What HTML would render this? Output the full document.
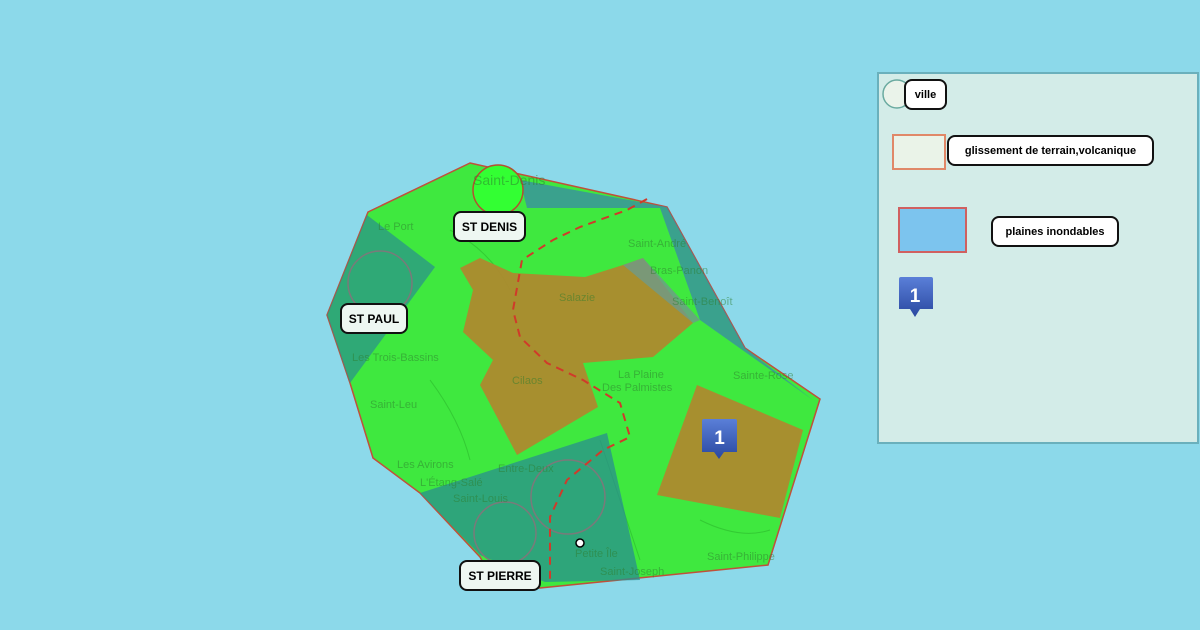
<!DOCTYPE html>
<html><head><style>
body{margin:0;width:1200px;height:630px;background:#8cd9ea;overflow:hidden;font-family:"Liberation Sans",sans-serif;position:relative}
.lbl{position:absolute;background:#eef7f2;border:2px solid #111;border-radius:8px;font-weight:bold;font-size:12px;color:#000;display:flex;align-items:center;justify-content:center;box-sizing:border-box}
.lg{font-size:11px}
</style></head><body>
<svg width="1200" height="630" style="position:absolute;left:0;top:0">
<defs><linearGradient id="mk" x1="0" y1="0" x2="0" y2="1"><stop offset="0" stop-color="#5a7fd8"/><stop offset="1" stop-color="#2a48a0"/></linearGradient></defs>
<polygon points="470,163 667,207 745,348 820,399 768,565 540,588 497,587 480,557 420,493 373,458 350,383 327,315 368,212" fill="#3fe83f" stroke="#c0503a" stroke-width="1.5"/>
<g fill="none" stroke="#2cb82c" stroke-width="1" opacity="0.6">
<path d="M430,380 q30,40 40,80 M600,440 q20,60 40,120 M450,230 q40,20 60,60 M700,520 q40,20 70,10"/>
</g>
<polygon points="367,215 435,267 350,383 327,315" fill="#2a8f8f" fill-opacity="0.7"/>
<polygon points="520,180 667,207 745,348 813,400 700,320 660,208 527,208" fill="#3a8aa8" fill-opacity="0.75"/>
<polygon points="420,493 607,433 640,580 545,582 480,555" fill="#2a8f8f" fill-opacity="0.75"/>
<polygon points="460,268 480,258 513,273 585,277 623,265 643,258 693,323 653,357 583,363 598,407 517,455 480,385 493,360 463,332 473,290" fill="#ad8a2e" fill-opacity="0.95"/>
<polygon points="697,385 803,430 780,518 657,495" fill="#ad8a2e" fill-opacity="0.95"/>
<polygon points="623,265 643,258 700,320 693,323" fill="#6f9a8a" fill-opacity="0.8"/>
<circle cx="498" cy="190" r="25" fill="#3f3" stroke="#b35030" stroke-width="1.5"/>
<circle cx="380" cy="283" r="32" fill="none" stroke="#7a7a7a" stroke-width="1.5"/>
<circle cx="568" cy="497" r="37" fill="none" stroke="#7a7a7a" stroke-width="1.5"/>
<circle cx="505" cy="533" r="31" fill="none" stroke="#7a7a7a" stroke-width="1.5"/>
<path d="M647,199 L627,210 L580,227 L553,240 L522,260 L513,310 L520,337 L547,363 L583,380 L620,403 L630,437 L603,450 L567,480 L550,517 L550,583" fill="none" stroke="#d03a2a" stroke-width="2" stroke-dasharray="8,6"/>
<circle cx="580" cy="543" r="4" fill="#fff" stroke="#000" stroke-width="1.5"/>
<g fill="#2e7d2e" font-size="11" opacity="0.5" font-family="Liberation Sans">
<text x="473" y="185" font-size="14">Saint-Denis</text><text x="378" y="230">Le Port</text><text x="628" y="247">Saint-André</text><text x="650" y="274">Bras-Panon</text><text x="672" y="305">Saint-Benoît</text><text x="559" y="301">Salazie</text><text x="352" y="361">Les Trois-Bassins</text><text x="618" y="378">La Plaine</text><text x="602" y="391">Des Palmistes</text><text x="733" y="379">Sainte-Rose</text><text x="370" y="408">Saint-Leu</text><text x="397" y="468">Les Avirons</text><text x="420" y="486">L'Étang-Salé</text><text x="453" y="502">Saint-Louis</text><text x="707" y="560">Saint-Philippe</text><text x="600" y="575">Saint-Joseph</text><text x="575" y="557">Petite Île</text><text x="512" y="384">Cilaos</text><text x="498" y="472">Entre-Deux</text>
</g>
<g transform="translate(702,419)"><path d="M0,2 Q0,0 2,0 H33 Q35,0 35,2 V33 H22 L17,40 L12,33 H0 Z" fill="url(#mk)"/><text x="17.5" y="25" font-size="19" font-weight="bold" fill="#fff" text-anchor="middle" font-family="Liberation Sans">1</text></g>
<rect x="878" y="73" width="320" height="370" fill="#d3ece8" stroke="#6ab0bc" stroke-width="2"/>
<circle cx="897" cy="94" r="14" fill="#eaf3ea" stroke="#6aaaa0" stroke-width="1.5"/>
<rect x="893" y="135" width="52" height="34" fill="#eaf3e8" stroke="#e08868" stroke-width="2"/>
<rect x="899" y="208" width="67" height="44" fill="#7cc4ee" stroke="#d06060" stroke-width="2"/>
<g transform="translate(899,277)"><path d="M0,2 Q0,0 2,0 H32 Q34,0 34,2 V32 H21 L16,40 L11,32 H0 Z" fill="url(#mk)"/><text x="16" y="25" font-size="19" font-weight="bold" fill="#fff" text-anchor="middle" font-family="Liberation Sans">1</text></g>
</svg>
<div class="lbl" style="left:453px;top:211px;width:73px;height:31px">ST DENIS</div>
<div class="lbl" style="left:340px;top:303px;width:68px;height:31px">ST PAUL</div>
<div class="lbl" style="left:459px;top:560px;width:82px;height:31px">ST PIERRE</div>
<div class="lbl lg" style="left:904px;top:79px;width:43px;height:31px;background:#fff">ville</div>
<div class="lbl lg" style="left:947px;top:135px;width:207px;height:31px;background:#fff">glissement de terrain,volcanique</div>
<div class="lbl lg" style="left:991px;top:216px;width:128px;height:31px;background:#fff">plaines inondables</div>
</body></html>
